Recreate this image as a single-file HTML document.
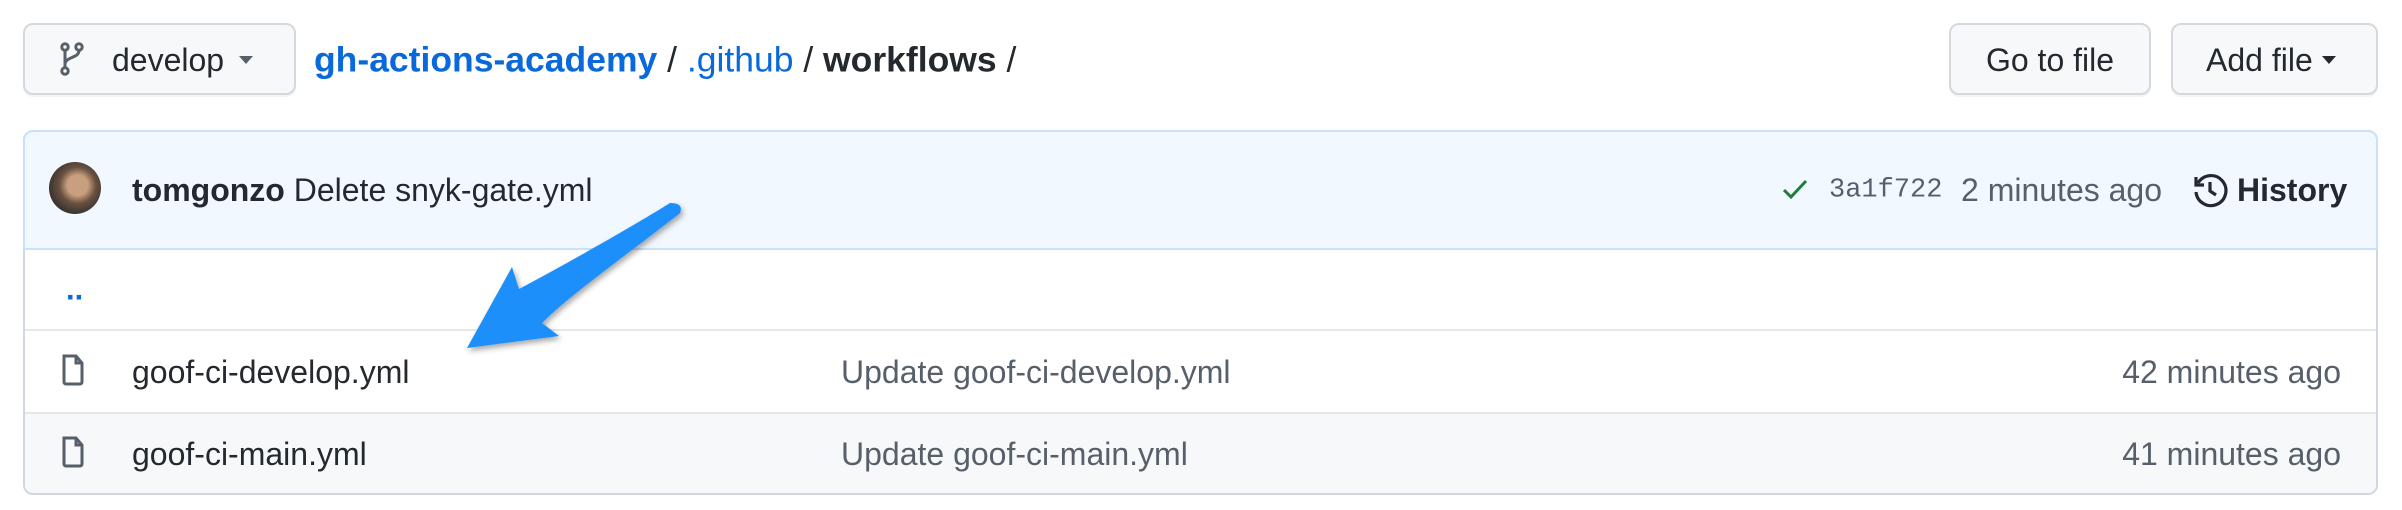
<!DOCTYPE html>
<html><head><meta charset="utf-8"><style>
*{margin:0;padding:0;box-sizing:border-box}
body{width:2402px;height:510px;background:#fff;font-family:"Liberation Sans",Arial,sans-serif;color:#24292f;position:relative;overflow:hidden}
.a{position:absolute;white-space:nowrap}
.btn{position:absolute;background:#f6f8fa;border:2px solid #d5d9dd;border-radius:10px;box-shadow:0 2px 0 rgba(27,31,36,.05)}
.c{line-height:1;transform:translateY(-50%)}
</style></head><body>
<div class="btn" style="left:23px;top:23px;width:273px;height:72px"></div>
<svg class="a" style="left:60px;top:42px" width="24" height="34" viewBox="0 0 24 34" fill="none" stroke="#57606a" stroke-width="3"><circle cx="5" cy="5" r="3.2"/><circle cx="5" cy="29" r="3.2"/><circle cx="19" cy="5" r="3.2"/><path d="M5 8.5v17M19 8.5c0 8-14 6-14 14"/></svg>
<div class="a c" style="left:112px;top:60px;font-size:32px">develop</div>
<svg class="a" style="left:239px;top:56px" width="14" height="8"><path d="M0 0h14L7 8z" fill="#57606a"/></svg>
<div class="a c" style="left:314px;top:60px;font-size:35.5px"><span style="color:#0969da;font-weight:bold">gh-actions-academy</span> / <span style="color:#0969da">.github</span> / <b>workflows</b> /</div>
<div class="btn" style="left:1949px;top:23px;width:202px;height:72px"></div>
<div class="a c" style="left:1949px;width:202px;text-align:center;top:60px;font-size:32px">Go to file</div>
<div class="btn" style="left:2171px;top:23px;width:207px;height:72px"></div>
<div class="a c" style="left:2206px;top:60px;font-size:32px">Add file</div>
<svg class="a" style="left:2322px;top:56px" width="14" height="8"><path d="M0 0h14L7 8z" fill="#24292f"/></svg>

<div class="a" style="left:23px;top:130px;width:2355px;height:365px;border:2px solid #d0d7de;border-radius:10px;overflow:hidden">
 <div class="a" style="left:0;top:0;width:100%;height:118px;background:#f1f8ff;border-bottom:2px solid #c8e1ff"></div>
 <div class="a" style="left:0;top:197px;width:100%;height:2px;background:#e5e8eb"></div>
 <div class="a" style="left:0;top:280px;width:100%;height:83px;background:#f6f8fa;border-top:2px solid #e5e8eb"></div>
</div>
<div class="a" style="left:23px;top:130px;width:2355px;height:120px;border:2px solid #c8e1ff;border-radius:10px 10px 0 0;border-bottom:none"></div>
<div class="a" style="left:49px;top:162px;width:52px;height:52px;border-radius:50%;background:radial-gradient(circle at 55% 45%,#c8a080 0 25%,#6a5040 45%,#3a3530 70%)"></div>
<div class="a c" style="left:132px;top:190px;font-size:32px"><b>tomgonzo</b> Delete snyk-gate.yml</div>
<svg class="a" style="left:1782px;top:178px" width="26" height="22"><path d="M2 12l7 7L24 3" fill="none" stroke="#1a7f37" stroke-width="3"/></svg>
<div class="a c" style="left:1829px;top:191px;font-size:27px;font-family:'Liberation Mono',monospace;color:#57606a">3a1f722</div>
<div class="a c" style="left:1961px;top:190px;font-size:32px;color:#57606a">2 minutes ago</div>
<svg class="a" style="left:2192px;top:172px" width="36" height="36" viewBox="0 0 36 36" fill="none" stroke="#24292f" stroke-width="3.2"><path d="M6 11A15 15 0 1 1 4 20"/><path d="M4 5v8h8"/><path d="M18 10v9l6 4"/></svg>
<div class="a c" style="left:2237px;top:190px;font-size:32px;font-weight:bold">History</div>

<div class="a c" style="left:66px;top:289px;font-size:31px;color:#0969da;font-weight:bold">..</div>

<svg class="a" style="left:61px;top:353px" width="24" height="34" viewBox="0 0 24 34" fill="none" stroke="#57606a" stroke-width="3"><path d="M3 3h12l6 7v19a2 2 0 0 1-2 2H5a2 2 0 0 1-2-2z"/><path d="M15 3v7h6"/></svg>
<div class="a c" style="left:132px;top:372px;font-size:32px">goof-ci-develop.yml</div>
<div class="a c" style="left:841px;top:372px;font-size:32px;color:#57606a">Update goof-ci-develop.yml</div>
<div class="a c" style="right:61px;top:372px;font-size:32px;color:#57606a">42 minutes ago</div>

<svg class="a" style="left:61px;top:435px" width="24" height="34" viewBox="0 0 24 34" fill="none" stroke="#57606a" stroke-width="3"><path d="M3 3h12l6 7v19a2 2 0 0 1-2 2H5a2 2 0 0 1-2-2z"/><path d="M15 3v7h6"/></svg>
<div class="a c" style="left:132px;top:454px;font-size:32px">goof-ci-main.yml</div>
<div class="a c" style="left:841px;top:454px;font-size:32px;color:#57606a">Update goof-ci-main.yml</div>
<div class="a c" style="right:61px;top:454px;font-size:32px;color:#57606a">41 minutes ago</div>

<svg class="a" style="left:0;top:0" width="2402" height="510">
<defs><filter id="s" x="-20%" y="-20%" width="140%" height="140%"><feDropShadow dx="2" dy="3" stdDeviation="3" flood-color="#000" flood-opacity=".35"/></filter></defs>
<path d="M670 203 C 640 222 570 262 519 289 L 512 267 L 467 348 L 559 336 L 542 323 C 570 295 620 260 680 213 Q 684 203 670 203 Z" fill="#1e8ffa" filter="url(#s)"/>
</svg>
</body></html>
